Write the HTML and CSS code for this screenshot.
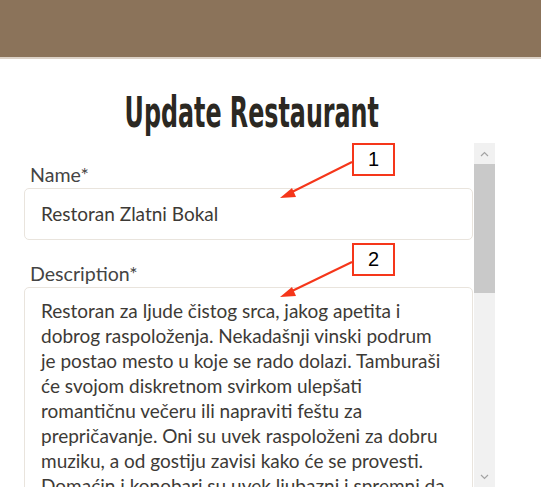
FILE: index.html
```html
<!DOCTYPE html>
<html lang="sr">
<head>
<meta charset="utf-8">
<title>Update Restaurant</title>
<link rel="stylesheet" href="styles.css">
</head>
<body>
<header class="topbar"></header>
<main class="page">
  <h1 class="title"><span class="title-text">Update Restaurant</span></h1>
  <div class="scroll-frame">
    <div class="scroll-content">
      <form class="form">
        <label class="field">
          <span class="label">Name*</span>
          <input class="input" type="text" value="Restoran Zlatni Bokal">
        </label>
        <label class="field">
          <span class="label">Description*</span>
          <textarea class="input textarea" rows="12">Restoran za ljude čistog srca, jakog apetita i dobrog raspoloženja. Nekadašnji vinski podrum je postao mesto u koje se rado dolazi. Tamburaši će svojom diskretnom svirkom ulepšati romantičnu večeru ili napraviti feštu za prepričavanje. Oni su uvek raspoloženi za dobru muziku, a od gostiju zavisi kako će se provesti. Domaćin i konobari su uvek ljubazni i spremni da pomognu.</textarea>
        </label>
      </form>
    </div>
    <div class="scrollbar" aria-hidden="true">
      <div class="sb-button">
        <svg width="9" height="6" viewBox="0 0 9 6"><polyline points="1,5 4.5,1.5 8,5" fill="none" stroke="#a3a3a3" stroke-width="1.2"/></svg>
      </div>
      <div class="sb-thumb"></div>
      <div class="sb-track"></div>
      <div class="sb-button">
        <svg width="9" height="6" viewBox="0 0 9 6"><polyline points="1,1 4.5,4.5 8,1" fill="none" stroke="#a3a3a3" stroke-width="1.2"/></svg>
      </div>
    </div>
  </div>
  <div class="callout callout-1">1</div>
  <div class="callout callout-2">2</div>
  <svg class="arrows" width="541" height="497" viewBox="0 0 541 497" aria-hidden="true">
    <line x1="352" y1="162" x2="290" y2="193" stroke="#f5361a" stroke-width="2"/>
    <polygon points="280,198 292,188 296,197" fill="#f5361a"/>
    <line x1="352" y1="262" x2="290" y2="292" stroke="#f5361a" stroke-width="2"/>
    <polygon points="280,297 292,287 296,296" fill="#f5361a"/>
  </svg>
</main>
</body>
</html>
```
FILE: styles.css
```css
* { box-sizing: border-box; }
html, body { margin: 0; padding: 0; background: #fff; }
body {
  font-family: Lato, "Open Sans", sans-serif;
  color: #444;
  width: 541px;
  height: 497px;
  overflow: hidden;
}
.topbar {
  height: 59px;
  background: #8b735a;
  border-bottom: 2px solid #dcd2c7;
}
.page {
  position: relative;
}
.title {
  margin: 0 0 0 8px;
  padding-top: 30px;
  height: 84px;
  width: 487px;
  text-align: center;
  font-family: "DejaVu Sans Condensed", "DejaVu Sans", sans-serif;
  font-weight: 700;
  font-size: 43px;
  line-height: 46px;
  color: #2b2822;
}
.title-text {
  display: inline-block;
  transform: scaleX(0.615);
}
.scroll-frame {
  margin-left: 8px;
  width: 487px;
  height: 344px;
  display: flex;
}
.scroll-content {
  flex: 1;
  overflow: hidden;
  padding: 19px 1px 0 16px;
}
.scrollbar {
  width: 21px;
  display: flex;
  flex-direction: column;
  background: #f1f1f1;
}
.sb-button {
  height: 21px;
  display: flex;
  align-items: center;
  justify-content: center;
  background: #f1f1f1;
}
.sb-thumb {
  height: 129px;
  background: #c9c9c9;
}
.sb-track {
  flex: 1;
}
.form {
  display: flex;
  flex-direction: column;
  gap: 21px;
}
.field {
  display: flex;
  flex-direction: column;
  gap: 1px;
}
.label {
  padding-left: 6px;
  font-size: 19.6px;
  line-height: 25px;
  color: #444;
}
.input {
  display: block;
  width: 100%;
  border: 1px solid #e9e4dd;
  border-radius: 5px;
  padding: 12px 16px;
  font-family: Lato, "Open Sans", sans-serif;
  font-size: 19px;
  line-height: 26px;
  color: #3d3a36;
  background: #fff;
  outline: none;
}
.textarea {
  resize: none;
  padding: 10px 22px 10px 16px;
  line-height: 25px;
  overflow: hidden;
  height: 330px;
}
.callout {
  position: absolute;
  left: 352px;
  width: 43px;
  height: 33px;
  border: 2px solid #f5361a;
  background: #fff;
  font-family: "Liberation Sans", Arial, sans-serif;
  font-size: 20px;
  line-height: 29px;
  text-align: center;
  color: #000;
}
.callout-1 { top: 84px; }
.callout-2 { top: 184px; }
.arrows {
  position: absolute;
  left: 0;
  top: -59px;
  pointer-events: none;
}
```
